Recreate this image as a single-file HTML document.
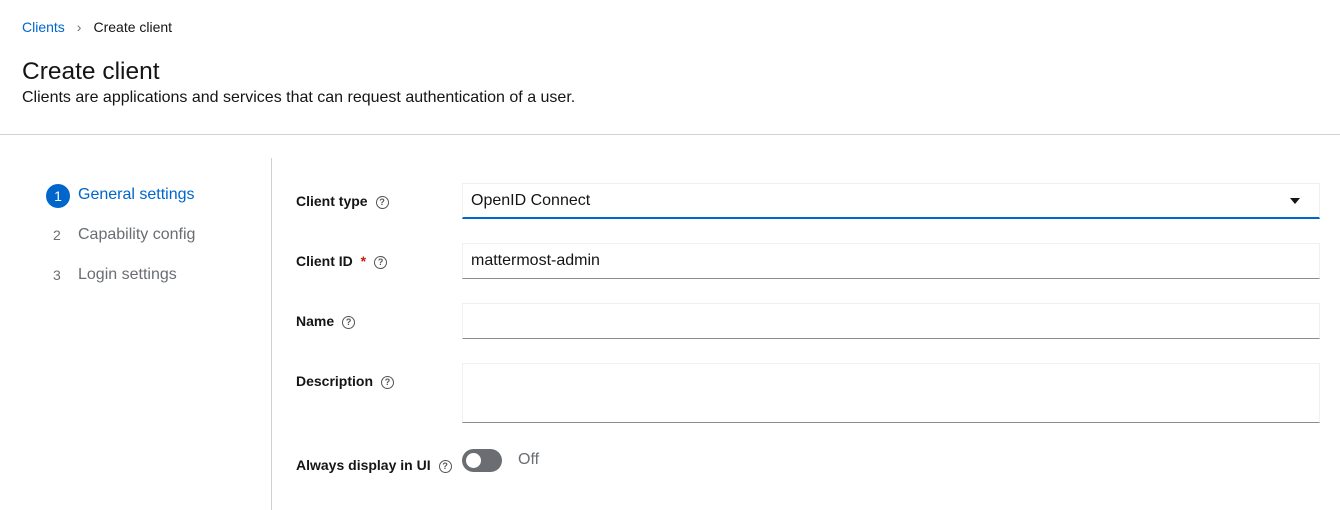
<!DOCTYPE html>
<html><head><style>
*{box-sizing:border-box;margin:0;padding:0}
body{width:1340px;height:510px;overflow:hidden;background:#fff;font-family:"Liberation Sans",sans-serif;color:#151515;position:relative}
.a{position:absolute}
.q{display:inline-block;width:13px;height:13px;border:1.5px solid #555;border-radius:50%;font-size:9px;line-height:10px;text-align:center;color:#555;font-weight:bold;vertical-align:1px;margin-left:8px}
.lbl{position:absolute;left:296px;font-size:14px;font-weight:bold}
.inp{position:absolute;left:462px;width:858px;height:36px;border:1px solid #f0f0f0;border-bottom:1px solid #8a8d90;font-size:16px;padding:8px 8px}
.step{position:absolute;font-size:16px;color:#6a6e73}
</style></head><body>
<div class="a" style="left:22px;top:19px;font-size:14px"><span style="color:#0066cc">Clients</span><span style="color:#6a6e73;margin:0 12px 0 12px">›</span>Create client</div>
<div class="a" style="left:22px;top:58px;font-size:24.5px">Create client</div>
<div class="a" style="left:22px;top:89px;font-size:16px">Clients are applications and services that can request authentication of a user.</div>
<div class="a" style="left:0;top:134px;width:1340px;height:1px;background:#d2d2d2"></div>
<div class="a" style="left:271px;top:158px;width:1px;height:352px;background:#d2d2d2"></div>
<div class="a" style="left:46px;top:184px;width:24px;height:24px;border-radius:50%;background:#0066cc;color:#fff;font-size:14px;text-align:center;line-height:24px">1</div>
<div class="step" style="left:78px;top:186px;color:#0066cc">General settings</div>
<div class="step" style="left:53px;top:227px;font-size:14px">2</div>
<div class="step" style="left:78px;top:226px">Capability config</div>
<div class="step" style="left:53px;top:267px;font-size:14px">3</div>
<div class="step" style="left:78px;top:266px">Login settings</div>

<div class="lbl" style="top:193px">Client type<span class="q">?</span></div>
<div class="inp" style="top:183px;border-bottom:2px solid #0066cc">OpenID Connect<span style="position:absolute;right:19px;top:14px;border-left:5px solid transparent;border-right:5px solid transparent;border-top:6px solid #151515"></span></div>
<div class="lbl" style="top:253px">Client ID <span style="color:#c9190b;margin-left:4px">*</span><span class="q">?</span></div>
<div class="inp" style="top:243px">mattermost-admin</div>
<div class="lbl" style="top:313px">Name<span class="q">?</span></div>
<div class="inp" style="top:303px"></div>
<div class="lbl" style="top:373px">Description<span class="q">?</span></div>
<div class="inp" style="top:363px;height:60px"></div>
<div class="lbl" style="top:457px">Always display in UI<span class="q">?</span></div>
<div class="a" style="left:462px;top:449px;width:40px;height:23px;border-radius:12px;background:#6a6e73"><div class="a" style="left:4px;top:4px;width:15px;height:15px;border-radius:50%;background:#fff"></div></div>
<div class="a" style="left:518px;top:451px;font-size:16px;color:#6a6e73">Off</div>
</body></html>
